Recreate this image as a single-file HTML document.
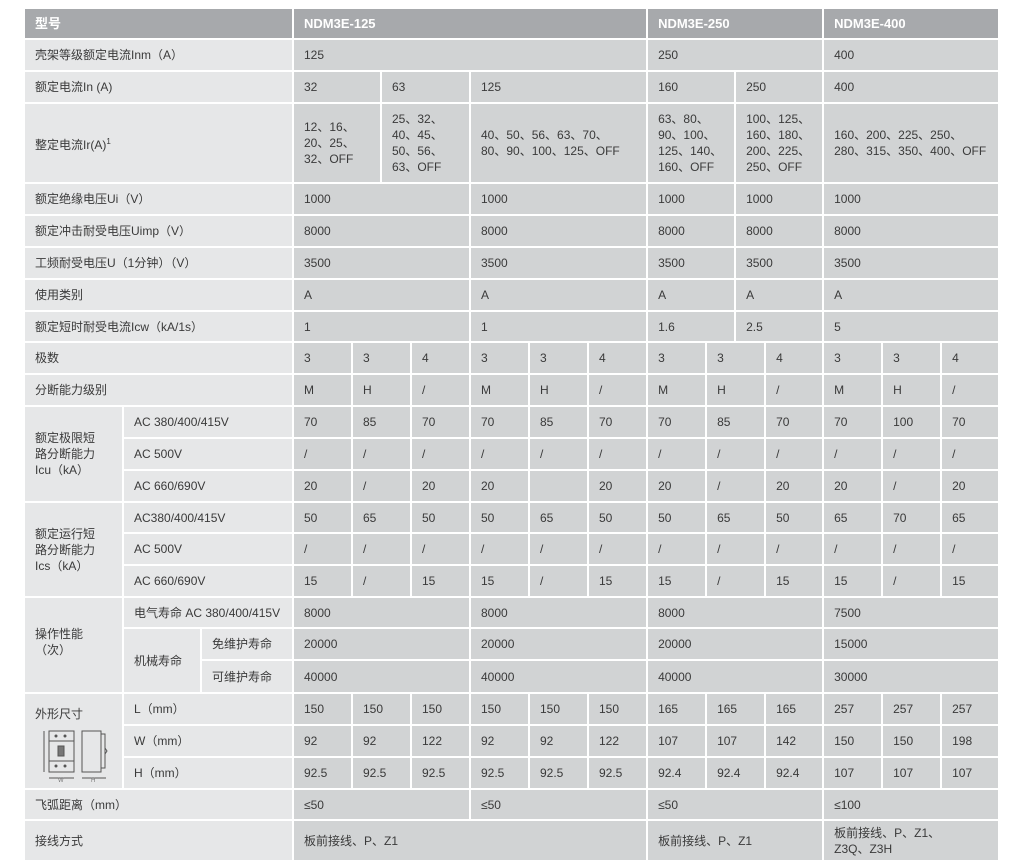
<!DOCTYPE html>
<html><head><meta charset="utf-8">
<style>
html,body{margin:0;padding:0;background:#fff;width:1017px;height:862px;overflow:hidden}
table{position:absolute;left:23px;top:7px;border-collapse:collapse;table-layout:fixed;width:976px;
font-family:"Liberation Sans","Noto Sans CJK SC",sans-serif;font-size:12px;color:#3a3a3a}
td{border:2px solid #fff;background:#d1d3d4;padding:0 0 0 10px;vertical-align:middle;line-height:16px;white-space:nowrap;overflow:hidden}
td.l{background:#e6e7e8}
tr.h td{background:#a7a9ac;color:#fff;font-weight:bold;font-size:13px}
tr{height:32px}
</style></head><body>
<table>
<colgroup>
<col style="width:99px"><col style="width:78px"><col style="width:92px">
<col style="width:59px"><col style="width:29px"><col style="width:30px"><col style="width:59px"><col style="width:59px"><col style="width:59px"><col style="width:59px">
<col style="width:59px"><col style="width:29px"><col style="width:30px"><col style="width:58px">
<col style="width:59px"><col style="width:59px"><col style="width:58px">
</colgroup>
<tr class="h" style="height:31px"><td colspan="3">型号</td><td colspan="7">NDM3E-125</td><td colspan="4">NDM3E-250</td><td colspan="3">NDM3E-400</td></tr>
<tr><td class="l" colspan="3">壳架等级额定电流Inm（A）</td><td colspan="7">125</td><td colspan="4">250</td><td colspan="3">400</td></tr>
<tr><td class="l" colspan="3">额定电流In (A)</td><td colspan="2">32</td><td colspan="2">63</td><td colspan="3">125</td><td colspan="2">160</td><td colspan="2">250</td><td colspan="3">400</td></tr>
<tr style="height:80px"><td class="l" colspan="3">整定电流Ir(A)<sup style="font-size:8px">1</sup></td><td colspan="2">12、16、<br>20、25、<br>32、OFF</td><td colspan="2">25、32、<br>40、45、<br>50、56、<br>63、OFF</td><td colspan="3">40、50、56、63、70、<br>80、90、100、125、OFF</td><td colspan="2">63、80、<br>90、100、<br>125、140、<br>160、OFF</td><td colspan="2">100、125、<br>160、180、<br>200、225、<br>250、OFF</td><td colspan="3">160、200、225、250、<br>280、315、350、400、OFF</td></tr>
<tr><td class="l" colspan="3">额定绝缘电压Ui（V）</td><td colspan="4">1000</td><td colspan="3">1000</td><td colspan="2">1000</td><td colspan="2">1000</td><td colspan="3">1000</td></tr>
<tr><td class="l" colspan="3">额定冲击耐受电压Uimp（V）</td><td colspan="4">8000</td><td colspan="3">8000</td><td colspan="2">8000</td><td colspan="2">8000</td><td colspan="3">8000</td></tr>
<tr><td class="l" colspan="3">工频耐受电压U（1分钟）（V）</td><td colspan="4">3500</td><td colspan="3">3500</td><td colspan="2">3500</td><td colspan="2">3500</td><td colspan="3">3500</td></tr>
<tr><td class="l" colspan="3">使用类别</td><td colspan="4">A</td><td colspan="3">A</td><td colspan="2">A</td><td colspan="2">A</td><td colspan="3">A</td></tr>
<tr style="height:31px"><td class="l" colspan="3">额定短时耐受电流Icw（kA/1s）</td><td colspan="4">1</td><td colspan="3">1</td><td colspan="2">1.6</td><td colspan="2">2.5</td><td colspan="3">5</td></tr>
<tr><td class="l" colspan="3">极数</td><td>3</td><td colspan="2">3</td><td>4</td><td>3</td><td>3</td><td>4</td><td>3</td><td colspan="2">3</td><td>4</td><td>3</td><td>3</td><td>4</td></tr>
<tr><td class="l" colspan="3">分断能力级别</td><td>M</td><td colspan="2">H</td><td>/</td><td>M</td><td>H</td><td>/</td><td>M</td><td colspan="2">H</td><td>/</td><td>M</td><td>H</td><td>/</td></tr>
<tr><td class="l" rowspan="3">额定极限短<br>路分断能力<br>Icu（kA）</td><td class="l" colspan="2">AC 380/400/415V</td><td>70</td><td colspan="2">85</td><td>70</td><td>70</td><td>85</td><td>70</td><td>70</td><td colspan="2">85</td><td>70</td><td>70</td><td>100</td><td>70</td></tr>
<tr><td class="l" colspan="2">AC 500V</td><td>/</td><td colspan="2">/</td><td>/</td><td>/</td><td>/</td><td>/</td><td>/</td><td colspan="2">/</td><td>/</td><td>/</td><td>/</td><td>/</td></tr>
<tr><td class="l" colspan="2">AC 660/690V</td><td>20</td><td colspan="2">/</td><td>20</td><td>20</td><td></td><td>20</td><td>20</td><td colspan="2">/</td><td>20</td><td>20</td><td>/</td><td>20</td></tr>
<tr style="height:31px"><td class="l" rowspan="3">额定运行短<br>路分断能力<br>Ics（kA）</td><td class="l" colspan="2">AC380/400/415V</td><td>50</td><td colspan="2">65</td><td>50</td><td>50</td><td>65</td><td>50</td><td>50</td><td colspan="2">65</td><td>50</td><td>65</td><td>70</td><td>65</td></tr>
<tr><td class="l" colspan="2">AC 500V</td><td>/</td><td colspan="2">/</td><td>/</td><td>/</td><td>/</td><td>/</td><td>/</td><td colspan="2">/</td><td>/</td><td>/</td><td>/</td><td>/</td></tr>
<tr><td class="l" colspan="2">AC 660/690V</td><td>15</td><td colspan="2">/</td><td>15</td><td>15</td><td>/</td><td>15</td><td>15</td><td colspan="2">/</td><td>15</td><td>15</td><td>/</td><td>15</td></tr>
<tr style="height:31px"><td class="l" rowspan="3" style="vertical-align:top;padding-top:28px">操作性能<br>（次）</td><td class="l" colspan="2">电气寿命 AC 380/400/415V</td><td colspan="4">8000</td><td colspan="3">8000</td><td colspan="4">8000</td><td colspan="3">7500</td></tr>
<tr><td class="l" rowspan="2">机械寿命</td><td class="l">免维护寿命</td><td colspan="4">20000</td><td colspan="3">20000</td><td colspan="4">20000</td><td colspan="3">15000</td></tr>
<tr style="height:33px"><td class="l">可维护寿命</td><td colspan="4">40000</td><td colspan="3">40000</td><td colspan="4">40000</td><td colspan="3">30000</td></tr>
<tr><td class="l" rowspan="3" style="vertical-align:top;padding-top:12px">外形尺寸<br>
<svg width="72" height="56" viewBox="0 0 72 56" style="margin:6px 0 0 4px;display:block" fill="none" stroke="#555" stroke-width="1">
<rect x="10" y="3" width="25" height="41"/><line x1="10" y1="13" x2="35" y2="13"/><line x1="10" y1="33" x2="35" y2="33"/>
<rect x="19" y="18" width="6" height="10" fill="#777"/>
<circle cx="17" cy="8" r="1" fill="#555"/><circle cx="26" cy="8" r="1" fill="#555"/><circle cx="17" cy="38" r="1" fill="#555"/><circle cx="26" cy="38" r="1" fill="#555"/>
<line x1="5" y1="3" x2="5" y2="44"/><line x1="10" y1="50" x2="35" y2="50"/>
<rect x="43" y="3" width="19" height="41"/><path d="M62 6 H66 V40 H62"/><path d="M66 20 l2 3 -2 3"/>
<line x1="43" y1="50" x2="67" y2="50"/>
<text x="19" y="54" font-size="6" fill="#777" stroke="none">W</text><text x="52" y="54" font-size="6" fill="#777" stroke="none">H</text>
</svg></td><td class="l" colspan="2">L（mm）</td><td>150</td><td colspan="2">150</td><td>150</td><td>150</td><td>150</td><td>150</td><td>165</td><td colspan="2">165</td><td>165</td><td>257</td><td>257</td><td>257</td></tr>
<tr><td class="l" colspan="2">W（mm）</td><td>92</td><td colspan="2">92</td><td>122</td><td>92</td><td>92</td><td>122</td><td>107</td><td colspan="2">107</td><td>142</td><td>150</td><td>150</td><td>198</td></tr>
<tr><td class="l" colspan="2">H（mm）</td><td>92.5</td><td colspan="2">92.5</td><td>92.5</td><td>92.5</td><td>92.5</td><td>92.5</td><td>92.4</td><td colspan="2">92.4</td><td>92.4</td><td>107</td><td>107</td><td>107</td></tr>
<tr style="height:31px"><td class="l" colspan="3">飞弧距离（mm）</td><td colspan="4">≤50</td><td colspan="3">≤50</td><td colspan="4">≤50</td><td colspan="3">≤100</td></tr>
<tr style="height:41px"><td class="l" colspan="3">接线方式</td><td colspan="7">板前接线、P、Z1</td><td colspan="4">板前接线、P、Z1</td><td colspan="3">板前接线、P、Z1、<br>Z3Q、Z3H</td></tr>
</table>
</body></html>
